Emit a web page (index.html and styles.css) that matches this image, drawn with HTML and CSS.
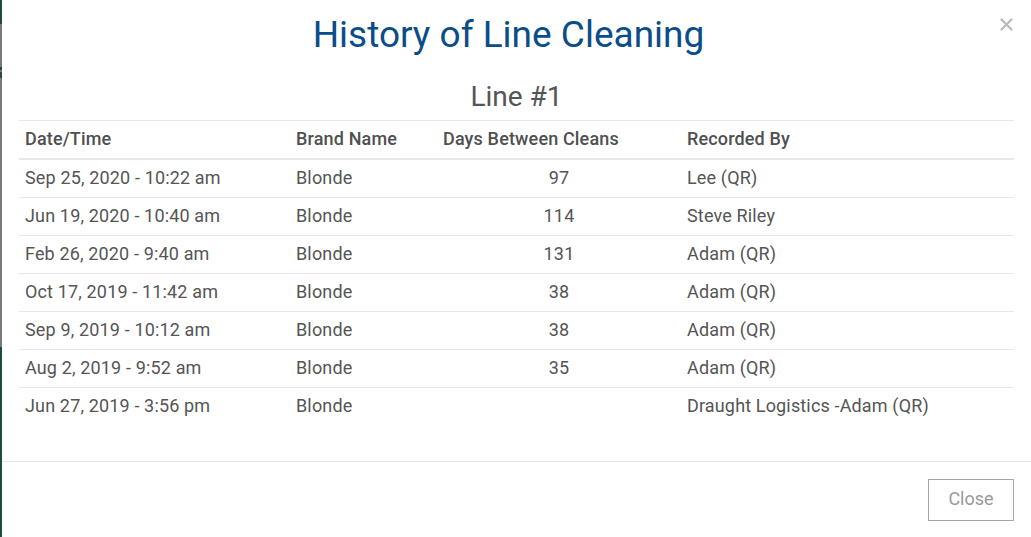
FILE: index.html
```html
<!DOCTYPE html>
<html lang="en">
<head>
<meta charset="utf-8">
<title>History of Line Cleaning</title>
<link rel="stylesheet" href="styles.css">
</head>
<body>
<div class="page">
  <div class="backdrop-strip"></div>
  <div class="modal">
    <div class="modal-header">
      <h2 class="modal-title">History of Line Cleaning</h2>
      <button class="close-x" aria-label="Close">
        <svg width="13" height="13" viewBox="0 0 13 13"><path d="M1.5 1.5 L11.5 11.5 M11.5 1.5 L1.5 11.5" stroke="#b8b8b8" stroke-width="2.2" stroke-linecap="round"/></svg>
      </button>
    </div>
    <div class="modal-body">
      <h3 class="line-title">Line #1</h3>
      <table class="history">
        <colgroup>
          <col class="c-date">
          <col class="c-brand">
          <col class="c-days">
          <col class="c-rec">
        </colgroup>
        <thead>
          <tr><th>Date/Time</th><th>Brand Name</th><th>Days Between Cleans</th><th>Recorded By</th></tr>
        </thead>
        <tbody>
          <tr><td>Sep 25, 2020 - 10:22 am</td><td>Blonde</td><td class="num">97</td><td>Lee (QR)</td></tr>
          <tr><td>Jun 19, 2020 - 10:40 am</td><td>Blonde</td><td class="num">114</td><td>Steve Riley</td></tr>
          <tr><td>Feb 26, 2020 - 9:40 am</td><td>Blonde</td><td class="num">131</td><td>Adam (QR)</td></tr>
          <tr><td>Oct 17, 2019 - 11:42 am</td><td>Blonde</td><td class="num">38</td><td>Adam (QR)</td></tr>
          <tr><td>Sep 9, 2019 - 10:12 am</td><td>Blonde</td><td class="num">38</td><td>Adam (QR)</td></tr>
          <tr><td>Aug 2, 2019 - 9:52 am</td><td>Blonde</td><td class="num">35</td><td>Adam (QR)</td></tr>
          <tr><td>Jun 27, 2019 - 3:56 pm</td><td>Blonde</td><td class="num"></td><td>Draught Logistics -Adam (QR)</td></tr>
        </tbody>
      </table>
    </div>
    <div class="modal-footer">
      <button class="btn-close">Close</button>
    </div>
  </div>
</div>
</body>
</html>
```

FILE: styles.css
```css
html, body {
  margin: 0;
  padding: 0;
  background: #fff;
}
body {
  font-family: Roboto, "Liberation Sans", Arial, sans-serif;
  color: #555;
}
.page {
  display: flex;
  width: 1031px;
  height: 537px;
  overflow: hidden;
}
.backdrop-strip {
  width: 2px;
  flex: none;
  background: linear-gradient(to bottom,
    #1f4d3c 0, #1f4d3c 24px,
    #787878 24px, #787878 67px,
    #2d4a40 67px, #2d4a40 70px,
    #787878 70px, #787878 72px,
    #2d4a40 72px, #2d4a40 78px,
    #787878 78px, #787878 347px,
    #1f4d3c 347px, #1f4d3c 537px);
}
.modal {
  flex: 1;
  background: #fff;
  display: flex;
  flex-direction: column;
  position: relative;
}
.modal-header {
  padding: 14px 16px 0 0;
}
.modal-title {
  margin: 0;
  text-align: center;
  font-size: 37px;
  line-height: 42px;
  font-weight: 400;
  color: #0b4d88;
}
.close-x {
  position: absolute;
  top: 18px;
  right: 18px;
  width: 13px;
  height: 13px;
  padding: 0;
  border: 0;
  background: none;
  line-height: 0;
}
.modal-body {
  padding: 0 17px;
}
.line-title {
  margin: 24px 0 6px;
  text-align: center;
  font-size: 28px;
  line-height: 34px;
  font-weight: 400;
  color: #555;
}
.history {
  width: 995px;
  border-collapse: collapse;
  table-layout: fixed;
  margin-bottom: 36px;
  font-size: 18px;
  letter-spacing: 0.15px;
}
.c-date { width: 271px; }
.c-brand { width: 147px; }
.c-days { width: 244px; }
.c-rec { width: 333px; }
.history th,
.history td {
  padding: 7px 6px 9px;
  line-height: 21px;
  text-align: left;
  white-space: nowrap;
}
.history th {
  font-weight: 500;
  color: #505050;
  border-top: 1px solid #e8e8e8;
  border-bottom: 2px solid #e8e8e8;
}
.history td {
  color: #555;
  border-top: 1px solid #e8e8e8;
}
.history tbody tr:first-child td {
  border-top: 0;
}
.history td.num {
  text-align: center;
}
.modal-footer {
  border-top: 1px solid #e5e5e5;
  padding: 17px 17px 15px;
  display: flex;
  justify-content: flex-end;
}
.btn-close {
  width: 86px;
  height: 42px;
  border: 1px solid #a6a6a6;
  background: #fff;
  color: #999;
  font-family: Roboto, "Liberation Sans", Arial, sans-serif;
  font-size: 18px;
  line-height: 20px;
  padding: 0 0 2px;
}
```
